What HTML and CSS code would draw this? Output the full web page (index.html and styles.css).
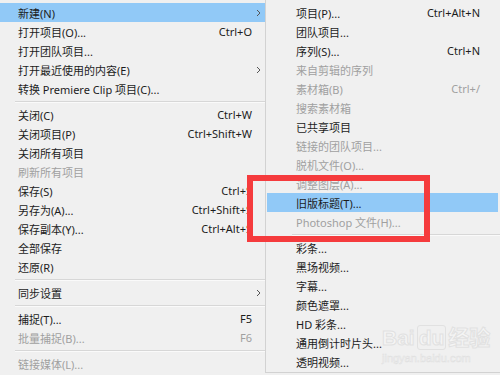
FILE: index.html
```html
<!doctype html>
<html lang="zh-CN">
  <head>
    <meta charset="utf-8">
    <title>文件菜单</title>
    <link rel="stylesheet" href="styles.css">
  </head>
  <body>
<div class="screen">
  <ul class="menu main">
    <li class="item hl"><span class="label">新建(N)</span><span class="key"></span><span class="arrow"><svg width="5" height="8" viewBox="0 0 5 8"><polyline points="1,1 4,4 1,7" fill="none" stroke="#555" stroke-width="1"/></svg></span></li>
    <li class="item"><span class="label">打开项目(O)...</span><span class="key">Ctrl+O</span><span class="arrow"></span></li>
    <li class="item"><span class="label">打开团队项目...</span><span class="key"></span><span class="arrow"></span></li>
    <li class="item"><span class="label">打开最近使用的内容(E)</span><span class="key"></span><span class="arrow"><svg width="5" height="8" viewBox="0 0 5 8"><polyline points="1,1 4,4 1,7" fill="none" stroke="#555" stroke-width="1"/></svg></span></li>
    <li class="item"><span class="label">转换 Premiere Clip 项目(C)...</span><span class="key"></span><span class="arrow"></span></li>
    <li class="sep"></li>
    <li class="item"><span class="label">关闭(C)</span><span class="key">Ctrl+W</span><span class="arrow"></span></li>
    <li class="item"><span class="label">关闭项目(P)</span><span class="key">Ctrl+Shift+W</span><span class="arrow"></span></li>
    <li class="item"><span class="label">关闭所有项目</span><span class="key"></span><span class="arrow"></span></li>
    <li class="item off"><span class="label">刷新所有项目</span><span class="key"></span><span class="arrow"></span></li>
    <li class="item"><span class="label">保存(S)</span><span class="key">Ctrl+S</span><span class="arrow"></span></li>
    <li class="item"><span class="label">另存为(A)...</span><span class="key">Ctrl+Shift+S</span><span class="arrow"></span></li>
    <li class="item"><span class="label">保存副本(Y)...</span><span class="key">Ctrl+Alt+S</span><span class="arrow"></span></li>
    <li class="item"><span class="label">全部保存</span><span class="key"></span><span class="arrow"></span></li>
    <li class="item"><span class="label">还原(R)</span><span class="key"></span><span class="arrow"></span></li>
    <li class="sep"></li>
    <li class="item"><span class="label">同步设置</span><span class="key"></span><span class="arrow"><svg width="5" height="8" viewBox="0 0 5 8"><polyline points="1,1 4,4 1,7" fill="none" stroke="#555" stroke-width="1"/></svg></span></li>
    <li class="sep"></li>
    <li class="item"><span class="label">捕捉(T)...</span><span class="key">F5</span><span class="arrow"></span></li>
    <li class="item off"><span class="label">批量捕捉(B)...</span><span class="key">F6</span><span class="arrow"></span></li>
    <li class="sep"></li>
    <li class="item off"><span class="label">链接媒体(L)...</span><span class="key"></span><span class="arrow"></span></li>
  </ul>
  <ul class="menu sub">
    <li class="item"><span class="label">项目(P)...</span><span class="key">Ctrl+Alt+N</span></li>
    <li class="item"><span class="label">团队项目...</span><span class="key"></span></li>
    <li class="item"><span class="label">序列(S)...</span><span class="key">Ctrl+N</span></li>
    <li class="item off"><span class="label">来自剪辑的序列</span><span class="key"></span></li>
    <li class="item off"><span class="label">素材箱(B)</span><span class="key">Ctrl+/</span></li>
    <li class="item off"><span class="label">搜索素材箱</span><span class="key"></span></li>
    <li class="item"><span class="label">已共享项目</span><span class="key"></span></li>
    <li class="item off"><span class="label">链接的团队项目...</span><span class="key"></span></li>
    <li class="item off"><span class="label">脱机文件(O)...</span><span class="key"></span></li>
    <li class="item off"><span class="label">调整图层(A)...</span><span class="key"></span></li>
    <li class="item hl"><span class="label">旧版标题(T)...</span><span class="key"></span></li>
    <li class="item off"><span class="label">Photoshop 文件(H)...</span><span class="key"></span></li>
    <li class="sep"></li>
    <li class="item"><span class="label">彩条...</span><span class="key"></span></li>
    <li class="item"><span class="label">黑场视频...</span><span class="key"></span></li>
    <li class="item"><span class="label">字幕...</span><span class="key"></span></li>
    <li class="item"><span class="label">颜色遮罩...</span><span class="key"></span></li>
    <li class="item"><span class="label">HD 彩条...</span><span class="key"></span></li>
    <li class="item"><span class="label">通用倒计时片头...</span><span class="key"></span></li>
    <li class="item"><span class="label">透明视频...</span><span class="key"></span></li>
  </ul>
  <div class="mark-box"></div>
  <div class="watermark">
    <div class="wm-logo">Bai<span class="wm-du">du</span>经验</div>
    <div class="wm-url">jingyan.baidu.com</div>
  </div>
</div>
  </body>
</html>
```

FILE: styles.css
```css
html, body {
  margin: 0;
  width: 100%;
  height: 100%;
}

* {
  box-sizing: border-box;
}

body {
  background: #f0f0f0;
  font-family: "Noto Sans", "Noto Sans CJK SC", sans-serif;
  font-size: 11px;
  color: #1c1c1c;
}

.screen {
  position: relative;
  width: 500px;
  height: 375px;
  display: flex;
  overflow: hidden;
  padding-top: 3px;
}

.menu {
  list-style: none;
  margin: 0;
  padding: 0;
}

.main {
  width: 265px;
}

.sub {
  width: 235px;
  height: 373px;
  margin-top: -3px;
  padding-top: 3px;
  border-left: 1px solid #d2d2d2;
  border-bottom: 1px solid #d2d2d2;
}

.item {
  height: 19px;
  display: flex;
  align-items: center;
  white-space: nowrap;
}

.main .item {
  padding-left: 18px;
}

.sub .item {
  padding-left: 29px;
  padding-right: 18px;
  margin-left: 1px;
  margin-right: 2px;
}

.label {
  flex: 1;
}

.key {
  text-align: right;
}

.arrow {
  width: 13px;
  display: flex;
  justify-content: center;
  align-items: center;
}

.hl {
  background: #91c9f7;
}

.off {
  color: #a0a0a0;
}

.sep {
  height: 7px;
  display: flex;
  align-items: center;
}

.sep::after {
  content: "";
  display: block;
  width: 100%;
  height: 1px;
  background: #d7d7d7;
  box-shadow: 0 1px 0 #fafafa;
}

.main .sep {
  margin-left: 15px;
}

.sub .sep {
  margin-left: 26px;
}

.mark-box {
  position: absolute;
  left: 247px;
  top: 175px;
  width: 183px;
  height: 67px;
  border: 6px solid #f53b3d;
}

.watermark {
  position: absolute;
  left: 382px;
  top: 324px;
  color: #f5f5f5;
  -webkit-text-stroke: 1px #e1e1e1;
  font-family: "Liberation Sans", "Noto Sans CJK SC", sans-serif;
}

.wm-logo {
  font-size: 21px;
  font-weight: bold;
  line-height: 28px;
}

.wm-du {
  margin: 0 2px;
  padding: 0 1px;
  border: 1px solid #e1e1e1;
  border-radius: 3px;
}

.wm-url {
  font-size: 11px;
  line-height: 12px;
  -webkit-text-stroke: 0.5px #e0e0e0;
}
```
